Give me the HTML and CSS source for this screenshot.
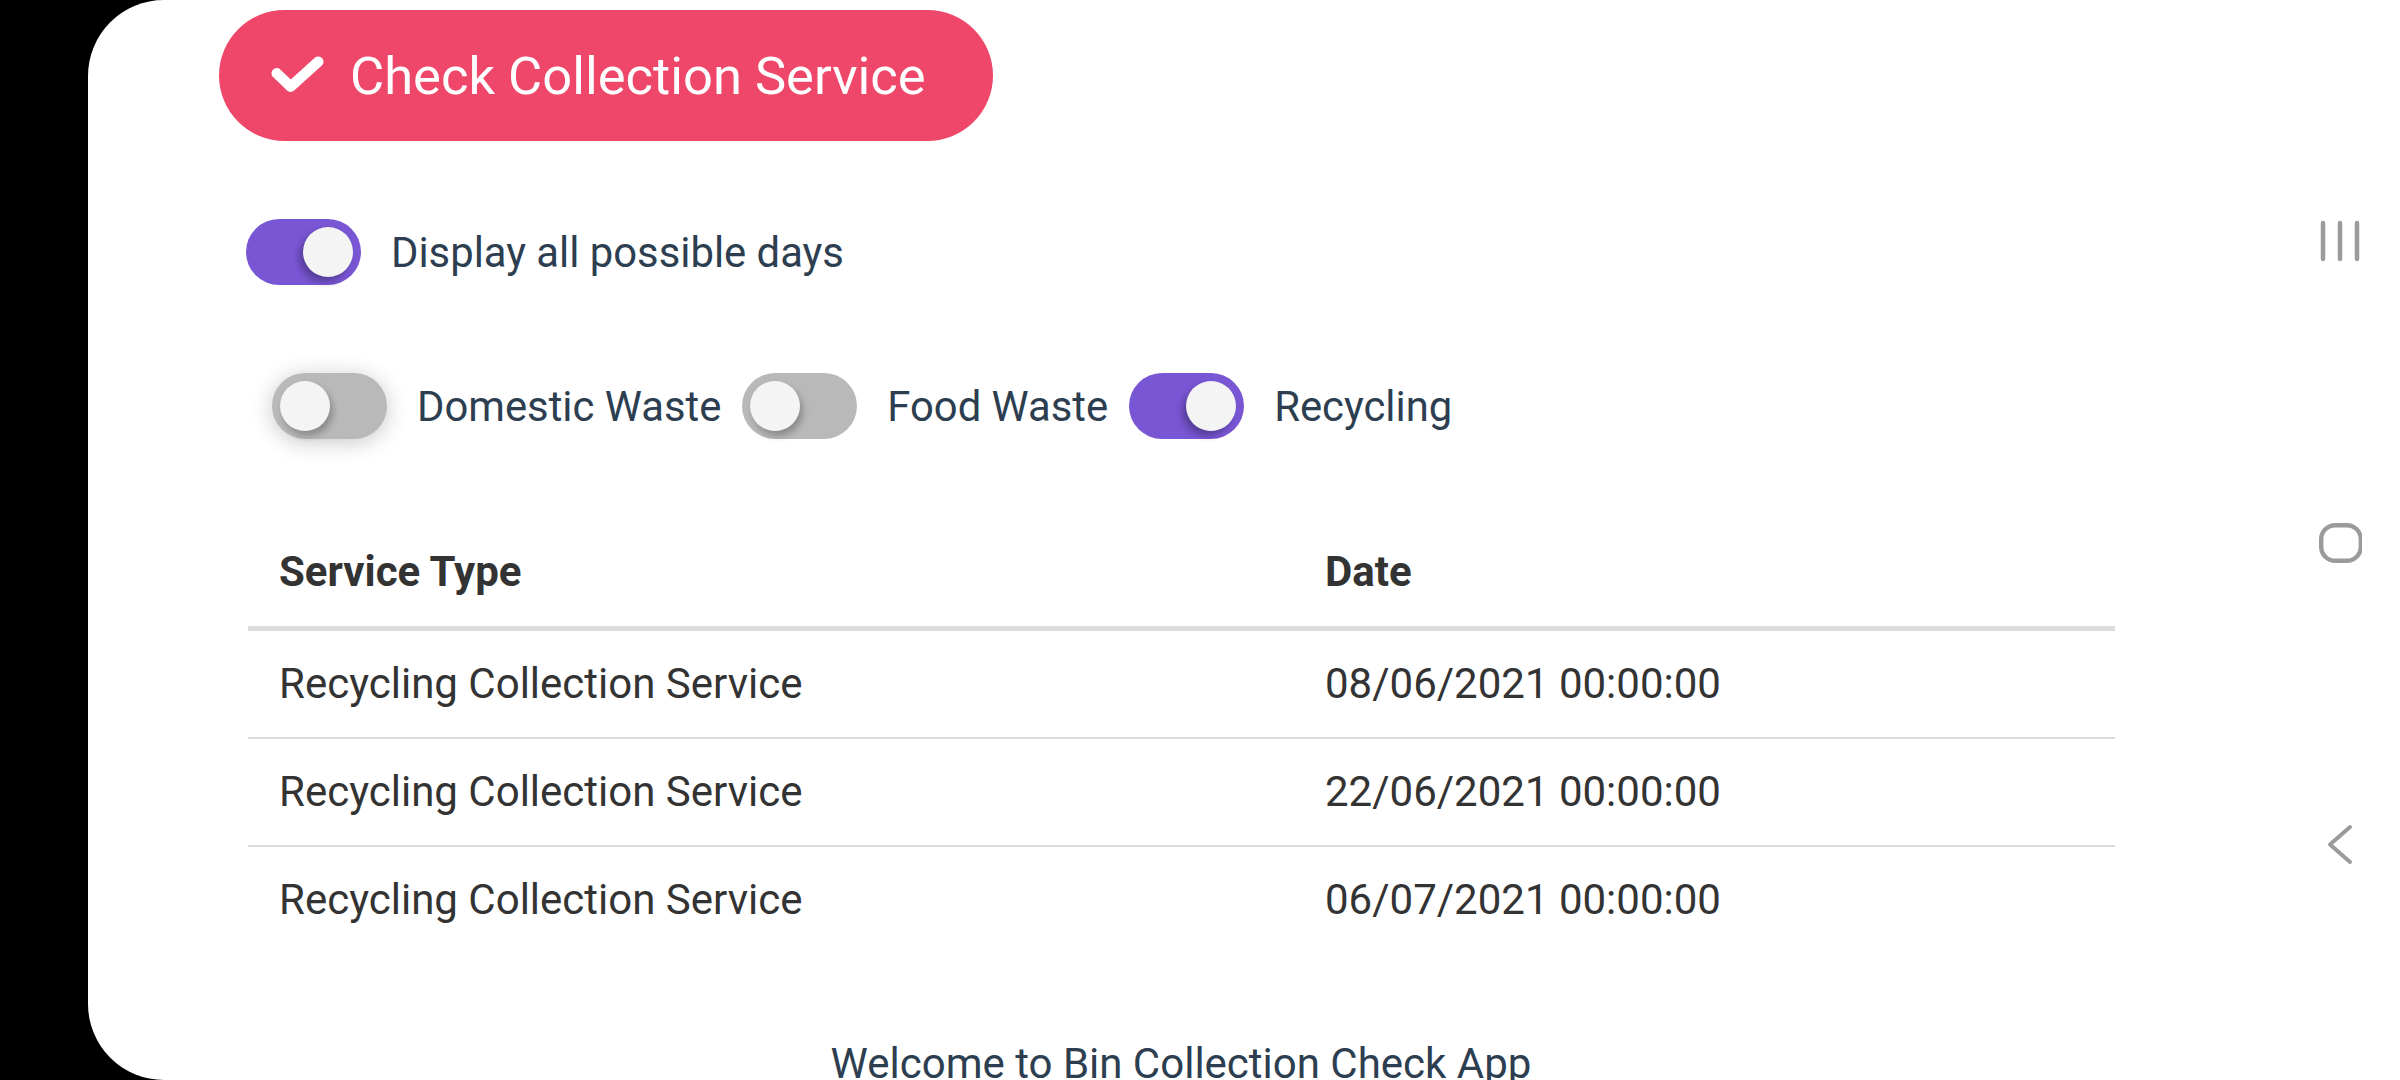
FILE: index.html
```html
<!DOCTYPE html>
<html lang="en">
<head>
<meta charset="utf-8">
<title>Bin Collection Check</title>
<link rel="stylesheet" href="styles.css">
</head>
<body class="device">
  <div class="screen">
    <main class="app">
      <button class="check-btn" type="button">
        <svg class="check-icon" width="56" height="42" viewBox="0 0 56 42" aria-hidden="true">
          <path d="M6.7 18.3 L20.7 31.7 L48.3 6.7" fill="none" stroke="#fff" stroke-width="10.5" stroke-linecap="round" stroke-linejoin="round"/>
        </svg>
        <span>Check Collection Service</span>
      </button>

      <div class="toggle-row row-all">
        <span class="toggle on"><span class="knob"></span></span>
        <span class="label">Display all possible days</span>
      </div>

      <div class="toggle-row row-types">
        <span class="toggle off glow"><span class="knob"></span></span>
        <span class="label">Domestic Waste</span>
        <span class="toggle off"><span class="knob"></span></span>
        <span class="label">Food Waste</span>
        <span class="toggle on"><span class="knob"></span></span>
        <span class="label">Recycling</span>
      </div>

      <table class="results">
        <thead>
          <tr><th class="col-type">Service Type</th><th>Date</th></tr>
        </thead>
        <tbody>
          <tr><td>Recycling Collection Service</td><td>08/06/2021 00:00:00</td></tr>
          <tr><td>Recycling Collection Service</td><td>22/06/2021 00:00:00</td></tr>
          <tr class="last"><td>Recycling Collection Service</td><td>06/07/2021 00:00:00</td></tr>
        </tbody>
      </table>

      <h1 class="welcome">Welcome to Bin Collection Check App</h1>
    </main>

    <nav class="navbar">
      <svg class="nav-icon" width="44" height="44" viewBox="0 0 44 44" aria-hidden="true">
        <path d="M5 4 V40 M22 4 V40 M39 4 V40" stroke="#9b9b9b" stroke-width="4.5" stroke-linecap="round" fill="none"/>
      </svg>
      <svg class="nav-icon" width="44" height="44" viewBox="0 0 44 44" aria-hidden="true">
        <rect x="3.2" y="4.2" width="39.6" height="35.6" rx="14" ry="14" stroke="#9b9b9b" stroke-width="4.4" fill="none"/>
      </svg>
      <svg class="nav-icon" width="44" height="44" viewBox="0 0 44 44" aria-hidden="true">
        <path d="M32 4 L12 21.5 L32 39" stroke="#9b9b9b" stroke-width="4" stroke-linecap="round" stroke-linejoin="round" fill="none"/>
      </svg>
    </nav>
  </div>
</body>
</html>
```

FILE: styles.css
```css
* {
  box-sizing: border-box;
}

html, body {
  margin: 0;
  padding: 0;
}

.device {
  width: 2400px;
  height: 1080px;
  background: #000;
  padding-left: 88px;
  overflow: hidden;
  font-family: Roboto, "Liberation Sans", Arial, sans-serif;
}

.screen {
  height: 1080px;
  background: #fff;
  border-radius: 76px 0 0 76px;
  display: flex;
  overflow: hidden;
}

.app {
  flex: 1;
  display: flex;
  flex-direction: column;
  align-items: flex-start;
  padding-top: 10px;
  color: #2c3e50;
}

.app > * {
  flex-shrink: 0;
}

/* Button */
.check-btn {
  display: flex;
  align-items: center;
  width: 774px;
  height: 131px;
  margin-left: 131px;
  padding: 0 0 0 51px;
  border: none;
  border-radius: 66px;
  background: #ef4769;
  color: #fff;
  font-family: Roboto, "Liberation Sans", Arial, sans-serif;
  font-size: 52.5px;
  font-weight: 400;
  gap: 24px;
}

.check-icon {
  flex: none;
}

/* Toggles */
.toggle-row {
  display: flex;
  align-items: center;
  height: 66px;
  font-size: 41.8px;
}

.row-all {
  margin-top: 78px;
  margin-left: 158px;
}

.row-types {
  margin-top: 88px;
  margin-left: 184px;
}

.toggle {
  position: relative;
  flex: none;
  width: 115px;
  height: 66px;
  border-radius: 33px;
}

.toggle.on {
  background: #7956d4;
}

.toggle.off {
  background: #b9b9b9;
}

.toggle.glow {
  box-shadow: 0 3px 22px rgba(0, 0, 0, 0.22);
}

.knob {
  position: absolute;
  top: 8px;
  width: 50px;
  height: 50px;
  border-radius: 50%;
  background: #f4f4f4;
}

.toggle.on .knob {
  right: 8px;
  box-shadow: -4px 5px 7px rgba(0, 0, 0, 0.28);
}

.toggle.off .knob {
  left: 8px;
  box-shadow: 3px 5px 7px rgba(0, 0, 0, 0.25);
}

.label {
  margin-left: 30px;
  margin-right: 21px;
  white-space: nowrap;
}

/* Table */
.results {
  margin-top: 79px;
  margin-left: 160px;
  width: 1867px;
  border-collapse: collapse;
  font-size: 42px;
  color: #333;
}

.results th,
.results td {
  text-align: left;
  padding: 30px 31px;
  line-height: 46px;
}

.results th {
  font-weight: 700;
  padding-top: 31px;
  padding-bottom: 31px;
  border-bottom: 5px solid #dcdcdc;
}

.results .col-type {
  width: 1046px;
}

.results td {
  border-bottom: 2px solid #dcdcdc;
}

.results tr.last td {
  border-bottom: none;
}

/* Welcome */
.welcome {
  align-self: stretch;
  margin: 86px 0 0;
  text-align: center;
  font-size: 42px;
  font-weight: 400;
  line-height: 49px;
  color: #2c3e50;
}

/* Android nav bar */
.navbar {
  flex: none;
  width: 126px;
  padding-left: 6px;
  padding-top: 6px;
  display: flex;
  flex-direction: column;
  align-items: center;
  justify-content: center;
  gap: 258px;
}

.nav-icon {
  display: block;
}
```
